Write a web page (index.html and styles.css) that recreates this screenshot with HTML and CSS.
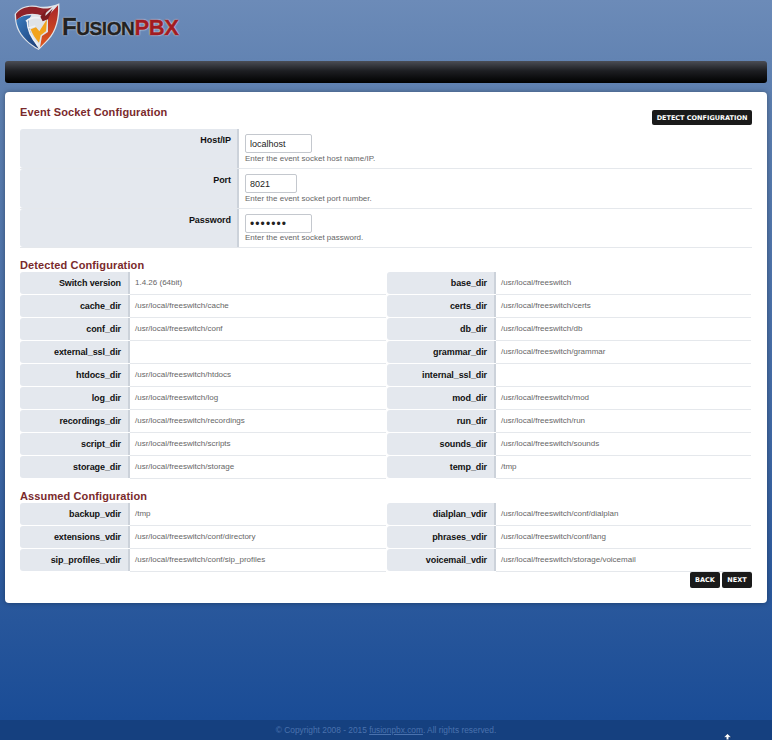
FILE: index.html
```html
<!DOCTYPE html>
<html lang="en">
<head>
  <meta charset="UTF-8">
  <meta name="viewport" content="width=device-width, initial-scale=1.0">
  <title>FusionPBX - Install</title>
  <link rel="stylesheet" href="styles.css">
</head>
<body>
  <div class="logo">
    <svg class="shield" width="50" height="51" viewBox="20 0 150 153">
      <defs>
        <linearGradient id="blue" x1="0" y1="0" x2="1" y2="1">
          <stop offset="0" stop-color="#3a7dc0"/>
          <stop offset="1" stop-color="#1c3c74"/>
        </linearGradient>
        <linearGradient id="fire" x1="0" y1="0" x2="0" y2="1">
          <stop offset="0" stop-color="#a8262b"/>
          <stop offset="1" stop-color="#e0581c"/>
        </linearGradient>
      </defs>
      <path d="M28 42C45 18 75 12 105 20C125 22 145 18 162 10C165 50 155 95 130 120C118 133 108 142 100 150C70 135 45 110 35 85C30 70 28 55 28 42Z" fill="#dfe3e8"/>
      <path d="M33 60C45 50 60 46 78 46L70 60C68 85 82 120 100 146C72 132 48 108 39 84C35 74 33 66 33 60Z" fill="url(#blue)"/>
      <path d="M32 42C48 22 75 16 105 24C120 27 130 26 140 22L112 48C95 40 70 38 50 48C44 52 38 56 33 60Z" fill="#8f2229"/>
      <path d="M62 64C72 54 88 51 104 54M66 62C66 90 82 118 98 136M69 84L90 78" fill="none" stroke="#eef1f5" stroke-width="5"/>
      <path d="M76 88L92 82L102 94L125 58L122 94L106 106L101 128C90 116 81 102 76 88Z" fill="#f2a31b"/>
      <path d="M128 48L158 16C160 55 150 95 127 118C120 126 112 134 104 142L110 108L128 96Z" fill="url(#fire)"/>
      <path d="M105 50L122 30L120 48L142 26L128 58L112 64Z" fill="#7c1a1f"/>
    </svg>
    <div class="logo-text"><span class="cap">F</span>USION<span class="pbx">PBX</span></div>
  </div>

  <div class="menu-bar"></div>

  <div class="card">
    <div class="title-row">
      <div class="section-title first">Event Socket Configuration</div>
      <button class="btn detect">DETECT CONFIGURATION</button>
    </div>

    <div class="form-row">
      <div class="form-label">Host/IP</div>
      <div class="form-field">
        <input class="text-input wide" type="text" value="localhost">
        <div class="hint">Enter the event socket host name/IP.</div>
      </div>
    </div>
    <div class="form-row">
      <div class="form-label">Port</div>
      <div class="form-field">
        <input class="text-input narrow" type="text" value="8021">
        <div class="hint">Enter the event socket port number.</div>
      </div>
    </div>
    <div class="form-row last">
      <div class="form-label">Password</div>
      <div class="form-field">
        <input class="text-input wide secret" type="password" value="ClueCon">
        <div class="hint">Enter the event socket password.</div>
      </div>
    </div>

    <div class="section-title detected">Detected Configuration</div>
    <div class="info-grid">
      <div class="info-label">Switch version</div><div class="info-value">1.4.26 (64bit)</div>
      <div class="info-label">base_dir</div><div class="info-value">/usr/local/freeswitch</div>
      <div class="info-label">cache_dir</div><div class="info-value">/usr/local/freeswitch/cache</div>
      <div class="info-label">certs_dir</div><div class="info-value">/usr/local/freeswitch/certs</div>
      <div class="info-label">conf_dir</div><div class="info-value">/usr/local/freeswitch/conf</div>
      <div class="info-label">db_dir</div><div class="info-value">/usr/local/freeswitch/db</div>
      <div class="info-label">external_ssl_dir</div><div class="info-value"></div>
      <div class="info-label">grammar_dir</div><div class="info-value">/usr/local/freeswitch/grammar</div>
      <div class="info-label">htdocs_dir</div><div class="info-value">/usr/local/freeswitch/htdocs</div>
      <div class="info-label">internal_ssl_dir</div><div class="info-value"></div>
      <div class="info-label">log_dir</div><div class="info-value">/usr/local/freeswitch/log</div>
      <div class="info-label">mod_dir</div><div class="info-value">/usr/local/freeswitch/mod</div>
      <div class="info-label">recordings_dir</div><div class="info-value">/usr/local/freeswitch/recordings</div>
      <div class="info-label">run_dir</div><div class="info-value">/usr/local/freeswitch/run</div>
      <div class="info-label">script_dir</div><div class="info-value">/usr/local/freeswitch/scripts</div>
      <div class="info-label">sounds_dir</div><div class="info-value">/usr/local/freeswitch/sounds</div>
      <div class="info-label">storage_dir</div><div class="info-value">/usr/local/freeswitch/storage</div>
      <div class="info-label">temp_dir</div><div class="info-value">/tmp</div>
    </div>

    <div class="section-title assumed">Assumed Configuration</div>
    <div class="info-grid">
      <div class="info-label">backup_vdir</div><div class="info-value">/tmp</div>
      <div class="info-label">dialplan_vdir</div><div class="info-value">/usr/local/freeswitch/conf/dialplan</div>
      <div class="info-label">extensions_vdir</div><div class="info-value">/usr/local/freeswitch/conf/directory</div>
      <div class="info-label">phrases_vdir</div><div class="info-value">/usr/local/freeswitch/conf/lang</div>
      <div class="info-label">sip_profiles_vdir</div><div class="info-value">/usr/local/freeswitch/conf/sip_profiles</div>
      <div class="info-label">voicemail_vdir</div><div class="info-value">/usr/local/freeswitch/storage/voicemail</div>
    </div>

    <div class="actions">
      <button class="btn">BACK</button>
      <button class="btn">NEXT</button>
    </div>
  </div>

  <div class="footer">&copy; Copyright 2008 - 2015 <a href="#">fusionpbx.com</a>. All rights reserved.</div>

  <svg class="cursor" width="9" height="7" viewBox="0 0 11 8">
    <path d="M5.5 .5L10 5H7V8H4V5H1Z" fill="#fff" stroke="#0b2a5c" stroke-width=".6"/>
  </svg>
</body>
</html>
```

FILE: styles.css
```css
html, body {
  margin: 0;
  padding: 0;
  height: 740px;
  overflow: hidden;
}
body {
  position: relative;
  display: flex;
  flex-direction: column;
  font-family: "Liberation Sans", Arial, sans-serif;
  background: linear-gradient(to bottom, #6c8bb8 0%, #5e80b0 12%, #3f68a4 60%, #174a95 100%);
}

/* header */
.logo {
  height: 61px;
  display: flex;
  align-items: flex-start;
  padding-left: 12px;
  box-sizing: border-box;
}
.shield {
  flex: none;
}
.logo-text {
  margin: 15px 0 0 0;
  font-size: 19px;
  line-height: 24px;
  font-weight: bold;
  letter-spacing: -.4px;
  color: #222;
  -webkit-text-stroke: .5px #222;
  text-shadow: 0 0 2px #fff, 0 0 1px #fff;
}
.cap {
  font-size: 24px;
}
.pbx {
  color: #a11c22;
  -webkit-text-stroke: .5px #a11c22;
  font-size: 22px;
}
.menu-bar {
  height: 22px;
  margin: 0 5px;
  border-radius: 3px;
  background: linear-gradient(to bottom, #4a4d55 0%, #1d1e22 45%, #000 100%);
}

/* main card */
.card {
  margin: 9px 5px 0;
  height: 511px;
  box-sizing: border-box;
  padding: 0 15px;
  background: #fff;
  border-radius: 4px;
  box-shadow: 0 0 5px rgba(0, 0, 0, .35);
}
.title-row {
  display: flex;
  justify-content: space-between;
  align-items: flex-start;
  height: 37px;
  padding-top: 14px;
  box-sizing: border-box;
}
.section-title {
  font-size: 11px;
  line-height: 13px;
  font-weight: bold;
  letter-spacing: .12px;
  color: #7a2a2c;
}
.section-title.detected {
  margin-top: 11px;
  height: 13px;
}
.section-title.assumed {
  margin-top: 11px;
  height: 13px;
}
.btn {
  background: #1a1a1a;
  color: #fff;
  border: 0;
  border-radius: 2px;
  width: 30px;
  height: 16px;
  padding: 0;
  font-family: "DejaVu Sans", sans-serif;
  font-size: 6.5px;
  font-weight: bold;
}
.detect {
  margin-top: 4px;
  width: 100px;
  height: 15px;
}

/* socket form */
.form-row {
  display: flex;
  height: 40px;
  border-bottom: 1px solid #e5e8ec;
  box-sizing: border-box;
}
.form-row.last {
  height: 39px;
}
.form-label {
  width: 219px;
  box-sizing: border-box;
  padding: 5px 6px 0 0;
  text-align: right;
  font-size: 9px;
  line-height: 12px;
  letter-spacing: -.05px;
  font-weight: bold;
  color: #111;
  background: #e4e8ee;
  border-right: 2px solid #ccd2da;
  border-radius: 3px 0 0 3px;
}
.form-field {
  padding: 5px 0 0 6px;
}
.text-input {
  display: block;
  height: 19px;
  box-sizing: border-box;
  padding: 0 4px;
  border: 1px solid #c4c8ce;
  border-radius: 2px;
  background: #fff;
  font-family: "Liberation Sans", Arial, sans-serif;
  font-size: 9px;
  color: #222;
}
.secret {
  font-size: 12px;
  letter-spacing: 1.1px;
}
.wide {
  width: 67px;
}
.narrow {
  width: 52px;
}
.hint {
  font-size: 8px;
  line-height: 9px;
  color: #666;
  margin-top: 1px;
}
.last .hint {
  margin-top: 0;
}

/* detected and assumed tables */
.info-grid {
  display: grid;
  grid-template-columns: 110px 257px 109px 1fr;
  grid-auto-rows: 23px;
}
.info-label {
  box-sizing: border-box;
  height: 22px;
  padding-right: 7px;
  text-align: right;
  font-size: 9px;
  line-height: 22px;
  letter-spacing: -.1px;
  font-weight: bold;
  color: #111;
  background: #e4e8ee;
  border-right: 2px solid #ccd2da;
  border-radius: 3px 0 0 3px;
}
.info-value {
  box-sizing: border-box;
  padding-left: 5px;
  font-size: 8px;
  line-height: 22px;
  color: #666;
  border-bottom: 1px solid #e5e8ec;
  margin-right: 1px;
}
.actions {
  display: flex;
  justify-content: flex-end;
  gap: 2px;
}

.footer {
  margin-top: auto;
  height: 20px;
  background: #15407f;
  text-align: center;
  font-size: 8.35px;
  line-height: 21px;
  color: #4a72ae;
}
.footer a {
  color: #4a72ae;
}
.cursor {
  position: absolute;
  left: 723px;
  top: 733px;
}
```
